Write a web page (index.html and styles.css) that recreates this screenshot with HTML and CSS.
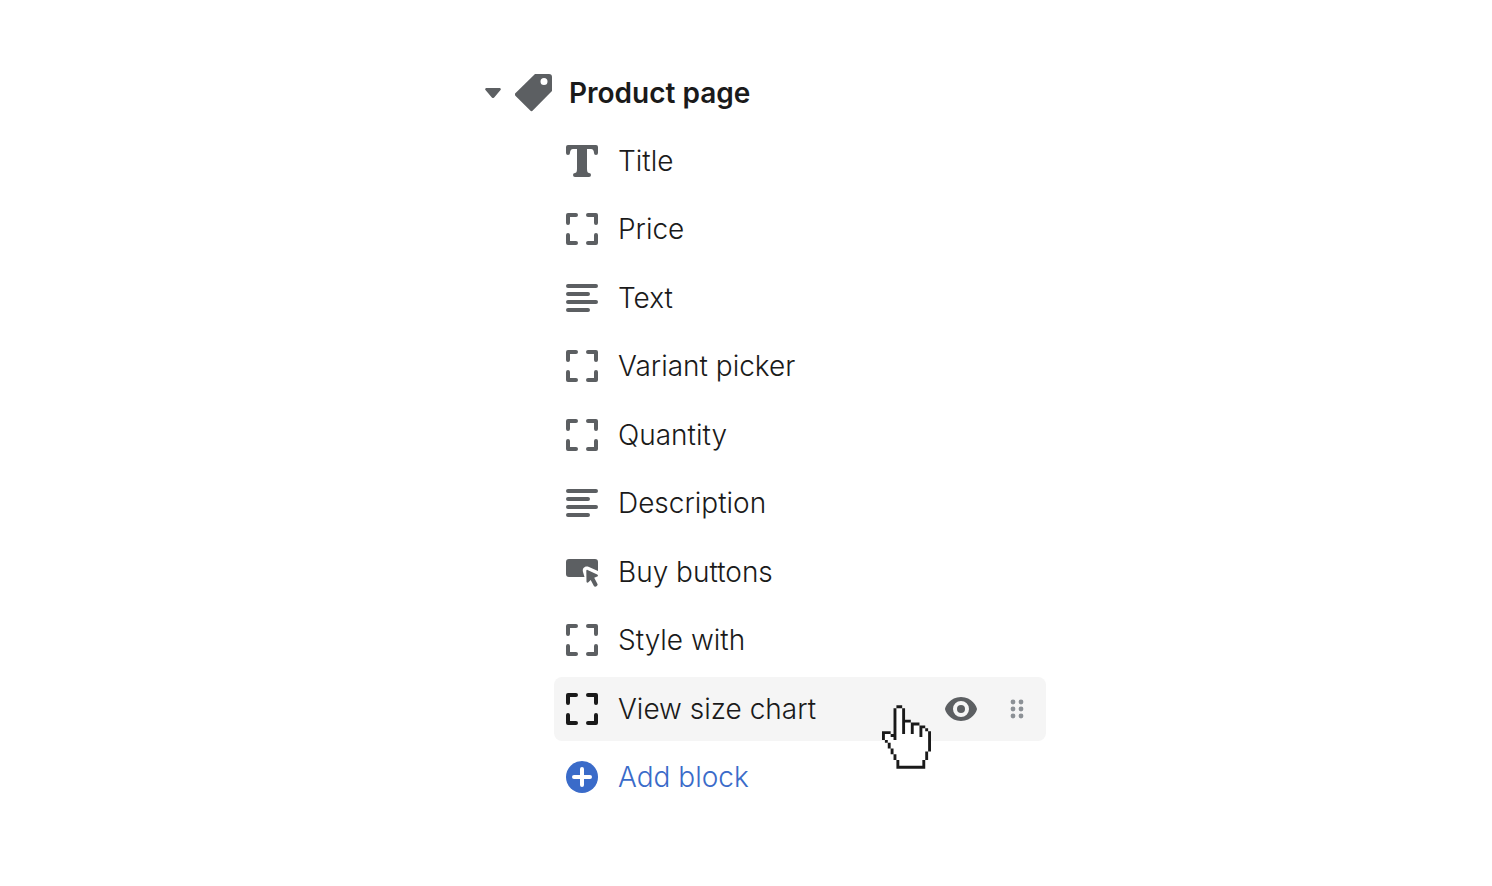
FILE: index.html
```html
<!DOCTYPE html>
<html lang="en">
<head>
  <meta charset="UTF-8" />
  <meta name="viewport" content="width=device-width, initial-scale=1.0" />
  <title>Product page</title>
  <link rel="stylesheet" href="styles.css">
</head>
<body>

  <!-- SHARED ICONS -->
  <svg class="icon-defs" aria-hidden="true">
    <symbol id="icon-block" viewBox="0 0 32 32">
      <path d="M2 10V2h8M22 2h8v8M30 22v8h-8M10 30H2v-8" fill="none" stroke="currentColor" stroke-width="4" stroke-linecap="round" stroke-linejoin="round"/>
    </symbol>
    <symbol id="icon-text" viewBox="0 0 32 32">
      <path d="M2 4h28M2 12h20M2 20h28M2 28h20" fill="none" stroke="currentColor" stroke-width="4" stroke-linecap="round"/>
    </symbol>
  </svg>

  <main class="sidebar">
    <!-- SECTION HEADER -->
    <div class="section-header">
      <button class="toggle" type="button" aria-label="Collapse section" aria-expanded="true">
        <svg viewBox="0 0 16 10"><path d="M1.500 0h13a1.200 1.200 0 0 1 1 2L9.400 9.200a1.800 1.800 0 0 1-2.800 0L.5 2a1.200 1.200 0 0 1 1-2z"/></svg>
      </button>
      <svg class="icon-tag" viewBox="0 0 37 38"><path fill-rule="evenodd" d="M20 0h14a3 3 0 0 1 3 3v14L18 36.300a2 2 0 0 1-3 0L.6 22a2 2 0 0 1 0-3zM29 4a3.500 3.500 0 1 0 0 7 3.500 3.500 0 0 0 0-7z"/></svg>
      <h1>Product page</h1>
    </div>

    <!-- BLOCK LIST -->
    <ul class="blocks">
      <li class="block">
        <svg class="icon" viewBox="0 0 32 32"><path d="M2 0h28a2 2 0 0 1 2 2v6a2 2 0 0 1-4 0c0-2-1-4-3-4h-4v20c0 3 1 4 2 4a2 2 0 0 1 0 4H9a2 2 0 0 1 0-4c1 0 2-1 2-4V4H7C5 4 4 6 4 8a2 2 0 0 1-4 0V2a2 2 0 0 1 2-2z"/></svg>
        <a href="#">Title</a>
      </li>
      <li class="block">
        <svg class="icon"><use href="#icon-block"/></svg>
        <a href="#">Price</a>
      </li>
      <li class="block">
        <svg class="icon"><use href="#icon-text"/></svg>
        <a href="#">Text</a>
      </li>
      <li class="block">
        <svg class="icon"><use href="#icon-block"/></svg>
        <a href="#">Variant picker</a>
      </li>
      <li class="block">
        <svg class="icon"><use href="#icon-block"/></svg>
        <a href="#">Quantity</a>
      </li>
      <li class="block">
        <svg class="icon"><use href="#icon-text"/></svg>
        <a href="#">Description</a>
      </li>
      <li class="block">
        <svg class="icon" viewBox="0 0 32 32">
          <path d="M3 3h26a3 3 0 0 1 3 3v9l-9-4c-4-1.500-7 1-6 5l1.500 5H3a3 3 0 0 1-3-3V6a3 3 0 0 1 3-3z"/>
          <path d="M21.500 14l9.700 4.600c1 .5 1 1.600 0 2l-3 1.200 3.300 6.200c.8 1.800-2.600 3.800-3.600 1.900l-3.200-6-2.300 2.400c-.8.8-1.700.4-1.900-.6L20.300 15c0-1 .5-1.400 1.200-1z"/>
        </svg>
        <a href="#">Buy buttons</a>
      </li>
      <li class="block">
        <svg class="icon"><use href="#icon-block"/></svg>
        <a href="#">Style with</a>
      </li>
      <li class="block active">
        <svg class="icon"><use href="#icon-block"/></svg>
        <a href="#">View size chart</a>
        <button class="action-hide" type="button" aria-label="Hide block">
          <svg viewBox="0 0 32 24"><path fill-rule="evenodd" d="M16 0C5 0 0 10 0 12s5 12 16 12 16-10 16-12S27 0 16 0zm0 4a8 8 0 1 1 0 16 8 8 0 0 1 0-16z"/><circle cx="16" cy="12" r="4"/></svg>
        </button>
        <button class="action-drag" type="button" aria-label="Reorder block">
          <svg viewBox="0 0 12 20"><circle cx="2" cy="3" r="2.400"/><circle cx="10" cy="3" r="2.400"/><circle cx="2" cy="10" r="2.400"/><circle cx="10" cy="10" r="2.400"/><circle cx="2" cy="17" r="2.400"/><circle cx="10" cy="17" r="2.400"/></svg>
        </button>
        <svg class="pointer" viewBox="0 0 17 22" aria-hidden="true">
          <path fill="#fff" d="M5 1h2v5h3v1h3v1h2v1h1v7h-1v3h-1v2H6v-2H5v-2H4v-2H3v-2H2v-1H1v-2h2v1h2z"/>
          <path fill="#1a1a1a" d="M5 0h2v1H5zM4 1h1v11H4zM7 1h1v9H7zM8 5h2v1H8zM10 6h1v4h-1zM11 6h2v1h-2zM13 7h1v4h-1zM14 7h1v1h-1zM15 8h1v1h-1zM16 9h1v7h-1zM15 16h1v3h-1zM14 19h1v3h-1zM5 21h10v1H5zM5 19h1v3H5zM4 17h1v2H4zM3 15h1v2H3zM2 13h1v2H2zM1 12h1v1H1zM0 9h1v3H0zM1 9h2v1H1zM3 10h1v1H3z"/>
        </svg>
      </li>
      <li class="block add">
        <svg class="icon" viewBox="0 0 32 32"><circle cx="16" cy="16" r="16"/><path d="M16 8v16M8 16h16" stroke="#fff" stroke-width="4" stroke-linecap="round"/></svg>
        <button class="add-button" type="button">Add block</button>
      </li>
    </ul>
  </main>

</body>
</html>
```

FILE: styles.css
```css
/* RESET */
*, *::before, *::after {
  box-sizing: border-box;
  margin: 0;
  padding: 0;
}

body {
  font-family: Inter, 'Helvetica Neue', Arial, sans-serif;
  font-size: 28px;
  font-weight: 350;
  line-height: 40px;
  background-color: #fff;
  color: #1a1a1a;
}

a {
  text-decoration: none;
  color: inherit;
}

button {
  display: flex;
  background: none;
  border: none;
  font: inherit;
  color: inherit;
  cursor: pointer;
}

ul {
  list-style: none;
}

svg {
  display: block;
  flex-shrink: 0;
  fill: currentColor;
}

.icon-defs {
  position: absolute;
  width: 0;
  height: 0;
}

/* SIDEBAR */
.sidebar {
  display: flex;
  flex-direction: column;
  gap: 4px;
  max-width: 600px;
  min-height: 100vh;
  margin: 0 auto;
  padding: 61px 0 77px;
}

.section-header {
  display: flex;
  align-items: center;
  height: 64px;
  padding-left: 39px;
}

.section-header h1 {
  font-size: 28px;
  font-weight: 600;
}

.toggle {
  margin-right: 14px;
  color: #5c5f62;
}

.toggle svg {
  width: 16px;
  height: 10px;
}

.icon-tag {
  width: 37px;
  height: 38px;
  margin-right: 17px;
  color: #5c5f62;
}

/* BLOCK LIST */
.blocks {
  display: flex;
  flex: 1;
  flex-direction: column;
  justify-content: space-between;
  gap: 4px;
  margin-left: 108px;
}

.block {
  position: relative;
  display: flex;
  align-items: center;
  height: 64px;
  padding: 0 23px 0 12px;
  border-radius: 8px;
}

.block .icon {
  width: 32px;
  height: 32px;
  margin-right: 20px;
  color: #5c5f62;
}

.block a {
  flex: 1;
}

.block.active {
  background-color: #f5f5f5;
}

.block.active .icon {
  color: #1a1a1a;
}

.action-hide {
  margin-right: 34px;
  color: #5c5f62;
}

.action-hide svg {
  width: 32px;
  height: 24px;
}

.action-drag {
  color: #8c9196;
}

.action-drag svg {
  width: 12px;
  height: 20px;
  overflow: visible;
}

/* hand cursor over the hovered row */
.pointer {
  position: absolute;
  top: 28px;
  right: 115px;
  width: 49px;
  height: 64px;
  z-index: 1;
}

/* ADD BLOCK */
.block.add,
.block.add .icon {
  color: #3a6bc9;
}
```
